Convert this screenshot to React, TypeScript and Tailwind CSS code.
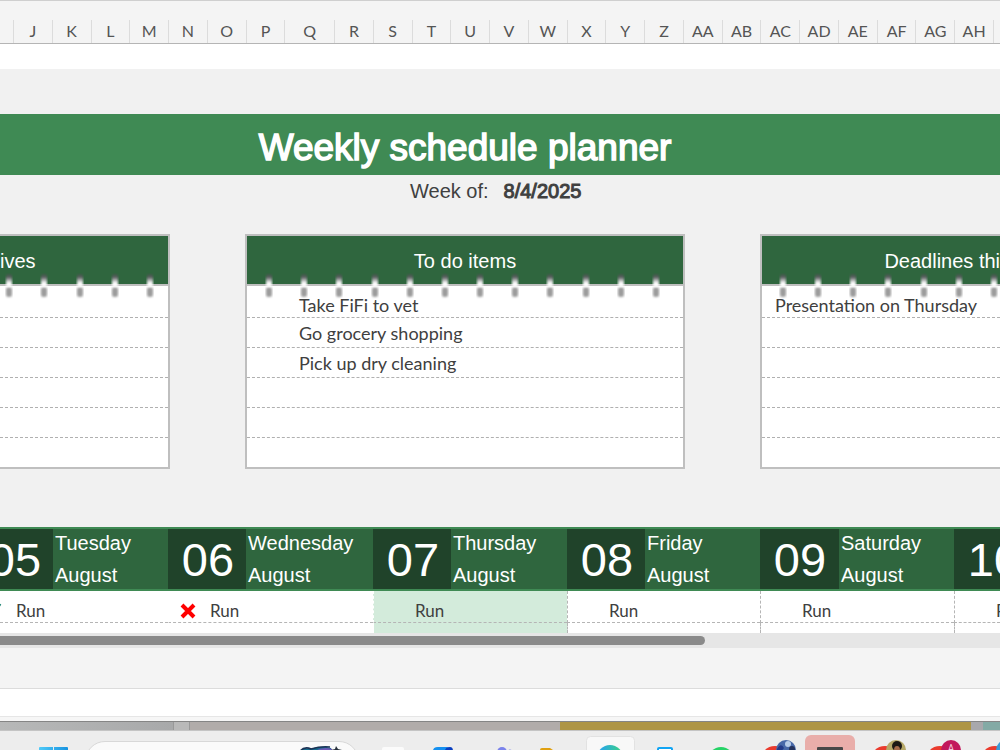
import React from 'react';

const columns = [
  'J', 'K', 'L', 'M', 'N', 'O', 'P', 'Q', 'R', 'S', 'T', 'U', 'V', 'W', 'X', 'Y', 'Z',
  'AA', 'AB', 'AC', 'AD', 'AE', 'AF', 'AG', 'AH',
];

const todos = ['Take FiFi to vet', 'Go grocery shopping', 'Pick up dry cleaning', '', '', ''];
const deadlines = ['Presentation on Thursday', '', '', '', '', ''];
const objectives = ['', '', '', '', '', ''];

const days = [
  { date: '05', name: 'Tuesday', mark: 'check', line: '' },
  { date: '06', name: 'Wednesday', mark: 'cross', line: 'border-l border-l-white' },
  { date: '07', name: 'Thursday', today: true, line: 'border-l border-l-white' },
  { date: '08', name: 'Friday', line: 'border-l border-dashed border-l-[#b5b5b5]' },
  { date: '09', name: 'Saturday', line: 'border-l border-dashed border-l-[#b5b5b5]' },
  { date: '10', name: '', line: 'border-l border-dashed border-l-[#b5b5b5]' },
];

const apps = ['docs', 'mail', 'teams', 'files', 'edge', 'phone', 'whatsapp', 'chrome1', 'excel', 'chrome2', 'chrome3', 'chrome4'];

function Ring() {
  return (
    <svg width="8" height="26" viewBox="0 0 8 26" className="shrink-0" aria-hidden="true">
      <defs>
        <linearGradient id="ring" x1="0" y1="0" x2="0" y2="1">
          <stop offset="0" stopColor="#4b5050" stopOpacity="0.5" />
          <stop offset="0.25" stopColor="#5b5d60" />
          <stop offset="0.7" stopColor="#ffffff" />
          <stop offset="1" stopColor="#ffffff" />
        </linearGradient>
        <filter id="soft" x="-50%" y="-20%" width="200%" height="140%">
          <feGaussianBlur stdDeviation="0.8" />
        </filter>
      </defs>
      <rect x="1" y="14" width="6" height="10" rx="2.5" fill="#9c9c9c" filter="url(#soft)" />
      <rect x="1" y="1" width="6" height="13" rx="2" fill="url(#ring)" filter="url(#soft)" />
    </svg>
  );
}

function Rings({ count, className }: { count: number; className: string }) {
  return (
    <div className={`absolute top-[37px] flex justify-between ${className}`}>
      {Array.from({ length: count }, (_, i) => (
        <Ring key={i} />
      ))}
    </div>
  );
}

function NoteCard({ title, lines, rings, ringClass, cardClass, titleClass, textClass }: {
  title: string;
  lines: string[];
  rings: number;
  ringClass: string;
  cardClass: string;
  titleClass: string;
  textClass: string;
}) {
  return (
    <section className={`relative overflow-hidden border-y-2 border-[#bfbfbf] bg-white ${cardClass}`}>
      <h2 className={`h-[50px] border-b-2 border-[#bfbfbf] bg-[#2f663e] pt-[10px] text-[20px] leading-[30px] whitespace-nowrap text-white ${titleClass}`}>
        {title}
      </h2>
      <ul className="text-[18px] text-[#404040] font-['Lato','Open_Sans',sans-serif]">
        {lines.map((line, i) => (
          <li
            key={i}
            className={`h-[30px] border-dashed border-[#b0b0b0] leading-[30px] whitespace-nowrap first:h-8 first:leading-[38px] last:h-[29px] not-last:border-b ${textClass}`}
          >
            {line}
          </li>
        ))}
      </ul>
      <Rings count={rings} className={ringClass} />
    </section>
  );
}

function Mark({ type }: { type?: string }) {
  if (type === 'cross') {
    return (
      <svg width="16" height="16" viewBox="0 0 16 16" className="shrink-0" aria-label="Missed">
        <path d="M2 2 L14 14 M14 2 L2 14" stroke="#ff0000" strokeWidth="4" />
      </svg>
    );
  }
  if (type === 'check') {
    return (
      <svg width="16" height="16" viewBox="0 0 16 16" className="shrink-0" aria-label="Done">
        <path d="M1 9 L5 14 L14.5 1" fill="none" stroke="#1e8573" strokeWidth="2" />
      </svg>
    );
  }
  return <span className="w-4 shrink-0" />;
}

function ChromeIcon({ badge }: { badge: React.ReactNode }) {
  return (
    <>
      <circle cx="27" cy="29" r="15" fill="#ea3b2e" />
      {badge}
    </>
  );
}

function AppIcon({ name }: { name: string }) {
  switch (name) {
    case 'docs':
      return <path d="M19 17 q0 -2 2 -2 h18 q2 0 2 2 v4 h-22 z" fill="#fbfbfb" />;
    case 'mail':
      return (
        <>
          <path d="M15 19 q0 -4 5 -4 h12 q-4 0 -4 4 z" fill="#1490f0" />
          <path d="M27 19 q0 -4 5 -4 q3 0 3 4 z" fill="#0a3fc0" />
        </>
      );
    case 'teams':
      return (
        <>
          <circle cx="29" cy="20" r="5" fill="#7b83eb" />
          <circle cx="37" cy="20" r="2.5" fill="#7b83eb" />
        </>
      );
    case 'files':
      return <path d="M12 19 v-1 q0 -2 2 -2 h8 l3 2 v2 z" fill="#e0a010" />;
    case 'edge':
      return (
        <>
          <rect x="3.5" y="4.5" width="48" height="20" rx="4" fill="#f8f8f8" stroke="#e2e2e2" />
          <circle cx="27" cy="26" r="13" fill="url(#edge)" />
        </>
      );
    case 'phone':
      return <rect x="20" y="16" width="14" height="12" rx="1" fill="#fff" stroke="#12a5f4" strokeWidth="2" />;
    case 'whatsapp':
      return <circle cx="28" cy="28" r="13" fill="#25d366" />;
    case 'chrome1':
      return (
        <ChromeIcon
          badge={
            <>
              <circle cx="38" cy="18" r="10" fill="#4868a8" />
              <path d="M29 17 q4 -7 7 -1 q-3 5 -7 3z" fill="#243a88" />
              <circle cx="40" cy="12" r="3" fill="#b7cbe8" />
              <circle cx="44" cy="17" r="3" fill="#26335c" />
            </>
          }
        />
      );
    case 'excel':
      return (
        <>
          <rect x="2" y="3" width="50" height="24" rx="6" fill="#e9aeaa" />
          <rect x="14" y="15" width="26" height="8" rx="1" fill="#484848" />
        </>
      );
    case 'chrome2':
      return (
        <ChromeIcon
          badge={
            <>
              <circle cx="38" cy="18" r="10" fill="#b6a867" />
              <circle cx="39" cy="14" r="5" fill="#1c1814" />
              <ellipse cx="39" cy="18" rx="3" ry="4" fill="#a56b4b" />
            </>
          }
        />
      );
    case 'chrome3':
      return (
        <ChromeIcon
          badge={
            <>
              <circle cx="38" cy="18" r="10" fill="#c2185b" />
              <text x="38" y="20" textAnchor="middle" fontSize="10" fill="#f4c9da" fontFamily="Roboto, sans-serif">A</text>
            </>
          }
        />
      );
    default:
      return <ChromeIcon badge={<circle cx="38" cy="18" r="10" fill="#3c9bd6" />} />;
  }
}

function Taskbar() {
  return (
    <footer className="flex h-5 items-start overflow-hidden bg-[#ededed]">
      <button aria-label="Start" className="ml-[39px] shrink-0">
        <svg width="29" height="20" viewBox="0 0 29 20">
          <defs>
            <linearGradient id="start" x1="0" y1="0" x2="1" y2="0">
              <stop offset="0" stopColor="#4fcaf8" />
              <stop offset="1" stopColor="#1893e0" />
            </linearGradient>
            <linearGradient id="edge" x1="0" y1="0" x2="1" y2="0">
              <stop offset="0.2" stopColor="#29a9e1" />
              <stop offset="0.9" stopColor="#3bcf8b" />
            </linearGradient>
          </defs>
          <path d="M0 17 q0 -1 1 -1 h13 v4 h-14z M15 16 h13 q1 0 1 1 v3 h-14z" fill="url(#start)" />
        </svg>
      </button>
      <button
        aria-label="Search"
        className="mt-[10px] ml-[17px] flex h-10 w-[274px] shrink-0 items-start justify-end rounded-full border border-[#d8d8d8] bg-[#fafafa] pt-[3px] pr-[13px]"
      >
        <svg width="48" height="14" viewBox="0 0 48 14">
          <path d="M2 9 Q5 1 13 4 Q24 0 34 3 L38 14 H2z" fill="#176b8e" />
          <path d="M15 8 Q24 1 35 4 L37 14 H15z" fill="#6d5bb5" />
          <path d="M3 6 Q8 1 14 4 Q24 1 33 2" fill="none" stroke="#1c3356" strokeWidth="1.5" />
          <path d="M34 5 l4 -1 l1 -3 l2 3 l4 1 v9 h-11z" fill="#26303c" />
        </svg>
      </button>
      <nav className="ml-1 flex" aria-label="Taskbar">
        {apps.map((name) => (
          <button key={name} aria-label={name} className="shrink-0">
            <svg width="55" height="20" viewBox="0 -1 55 20">
              <AppIcon name={name} />
            </svg>
          </button>
        ))}
      </nav>
    </footer>
  );
}

export default function App() {
  return (
    <div className="min-h-screen overflow-hidden bg-[#f1f1f1] font-['Liberation_Sans',Arial,sans-serif]">
      {/* Column headings */}
      <div className="grid h-11 grid-cols-[14px_repeat(7,minmax(0,39fr))_minmax(0,50fr)_repeat(17,minmax(0,39fr))_6px] border-t border-b border-t-[#cfcfcf] border-b-[#b5b5b5] bg-[#f4f4f4] pt-[19px] text-center text-[16px] leading-[22px] text-[#555] font-['Lato','Open_Sans',sans-serif]">
        <span className="border-r border-[#dcdcdc]" />
        {columns.map((name) => (
          <span key={name} className="border-r border-[#dcdcdc]">
            {name}
          </span>
        ))}
      </div>
      <div className="h-[25px] bg-white" />

      {/* Title */}
      <header className="mt-[45px]">
        <div className="flex h-[61px] items-center bg-[#3f8a54]">
          <h1 className="w-[93%] pt-[6px] text-center text-[37px] whitespace-nowrap text-white [-webkit-text-stroke:1.5px_white]">
            Weekly schedule planner
          </h1>
        </div>
        <p className="ml-[41%] flex h-8 gap-[15px] text-[20px] leading-8 whitespace-nowrap text-[#404040]">
          <span>Week of:</span>
          <strong className="font-normal [-webkit-text-stroke:1px_#404040]">8/4/2025</strong>
        </p>
      </header>

      {/* Notes */}
      <div className="mt-[27px] grid grid-cols-[170fr_440fr_240fr] gap-x-[75px]">
        <NoteCard
          title="ives"
          lines={objectives}
          rings={5}
          cardClass="border-r-2"
          titleClass=""
          textClass=""
          ringClass="right-[14px] w-[149px]"
        />
        <NoteCard
          title="To do items"
          lines={todos}
          rings={12}
          cardClass="border-x-2"
          titleClass="text-center"
          textClass="pl-[52px]"
          ringClass="left-[18px] w-[395px]"
        />
        <NoteCard
          title="Deadlines thi"
          lines={deadlines}
          rings={7}
          cardClass="border-l-2"
          titleClass="text-right"
          textClass="pl-[13px]"
          ringClass="left-[17px] w-[219px]"
        />
      </div>

      {/* Week */}
      <div className="mt-[58px] bg-white">
        <table className="w-full table-fixed border-separate border-spacing-0">
          <colgroup>
            <col className="w-[53px]" />
            <col className="w-[115px]" />
            <col className="w-[78px]" />
            <col className="w-[127px]" />
            <col className="w-[78px]" />
            <col className="w-[116px]" />
            <col className="w-[78px]" />
            <col className="w-[115px]" />
            <col className="w-[79px]" />
            <col className="w-[115px]" />
            <col className="w-[46px]" />
          </colgroup>
          <thead>
            <tr className="bg-[#2f663e] text-white">
              {days.map((day, i) => (
                <React.Fragment key={day.date}>
                  <th className="overflow-hidden border-y-2 border-[#3f8a54] bg-[#20432a] p-0 text-[47px] leading-[62px] font-normal">
                    <div className={i === 0 ? 'flex h-[60px] justify-end' : 'flex h-[60px]'}>
                      <span className="w-[78px] shrink-0 pl-[2px]">{day.date}</span>
                    </div>
                  </th>
                  {day.name && (
                    <th className="border-y-2 border-[#3f8a54] p-0 pl-[2px] text-left text-[20px] font-normal">
                      <div className="h-[60px]">
                        <div className="leading-7">{day.name}</div>
                        <div className="leading-9">August</div>
                      </div>
                    </th>
                  )}
                </React.Fragment>
              ))}
            </tr>
          </thead>
          <tbody className="text-[17px] text-[#404040] font-['Lato','Open_Sans',sans-serif]">
            <tr>
              {days.map((day, i) => (
                <td
                  key={day.date}
                  colSpan={day.name ? 2 : 1}
                  className={`overflow-hidden border-b border-dashed border-b-[#b5b5b5] p-0 ${day.today ? 'bg-[#d3ebdb]' : ''} ${day.line}`}
                >
                  <div className={`flex h-[31px] items-center gap-[14px] pt-[9px] leading-[22px] ${i === 0 ? '-ml-[14px]' : 'pl-[11px]'}`}>
                    <Mark type={day.mark} />
                    <span>Run</span>
                  </div>
                </td>
              ))}
            </tr>
            <tr className="h-[10px]">
              {days.map((day) => (
                <td
                  key={day.date}
                  colSpan={day.name ? 2 : 1}
                  className={`p-0 ${day.today ? 'bg-[#d3ebdb]' : ''} ${day.line}`}
                />
              ))}
            </tr>
          </tbody>
        </table>
      </div>

      {/* Horizontal scroll */}
      <div className="h-[15px] bg-[#e6e6e6] pt-[3px]">
        <div className="h-[9px] w-[70.5%] rounded-r-full bg-[#8a8a8a]" />
      </div>

      {/* Status bars */}
      <div className="h-[41px] border-b border-[#dcdcdc] bg-[#f4f4f4]" />
      <div className="h-7 border-b border-[#e6e6e6] bg-white" />
      <div className="h-[5px] border-b border-[#858585] bg-[#f6f6f6]" />

      {/* Strip of desktop behind the window */}
      <div className="flex h-[9px] border-b border-[#c4c4c4]">
        <div className="w-[17.4%] border-r border-[#999] bg-linear-to-r from-[#b7b8b8] to-[#a8a9aa]" />
        <div className="w-[1.6%] border-r border-[#999] bg-[#b9b9b9]" />
        <div className="w-[37%] bg-[#b1acaa]" />
        <div className="grow bg-[#ae9545]" />
        <div className="w-[1.2%] bg-[#a8a8ac]" />
        <div className="w-[1.7%] bg-[#83aaa5]" />
      </div>
      <Taskbar />
    </div>
  );
}
